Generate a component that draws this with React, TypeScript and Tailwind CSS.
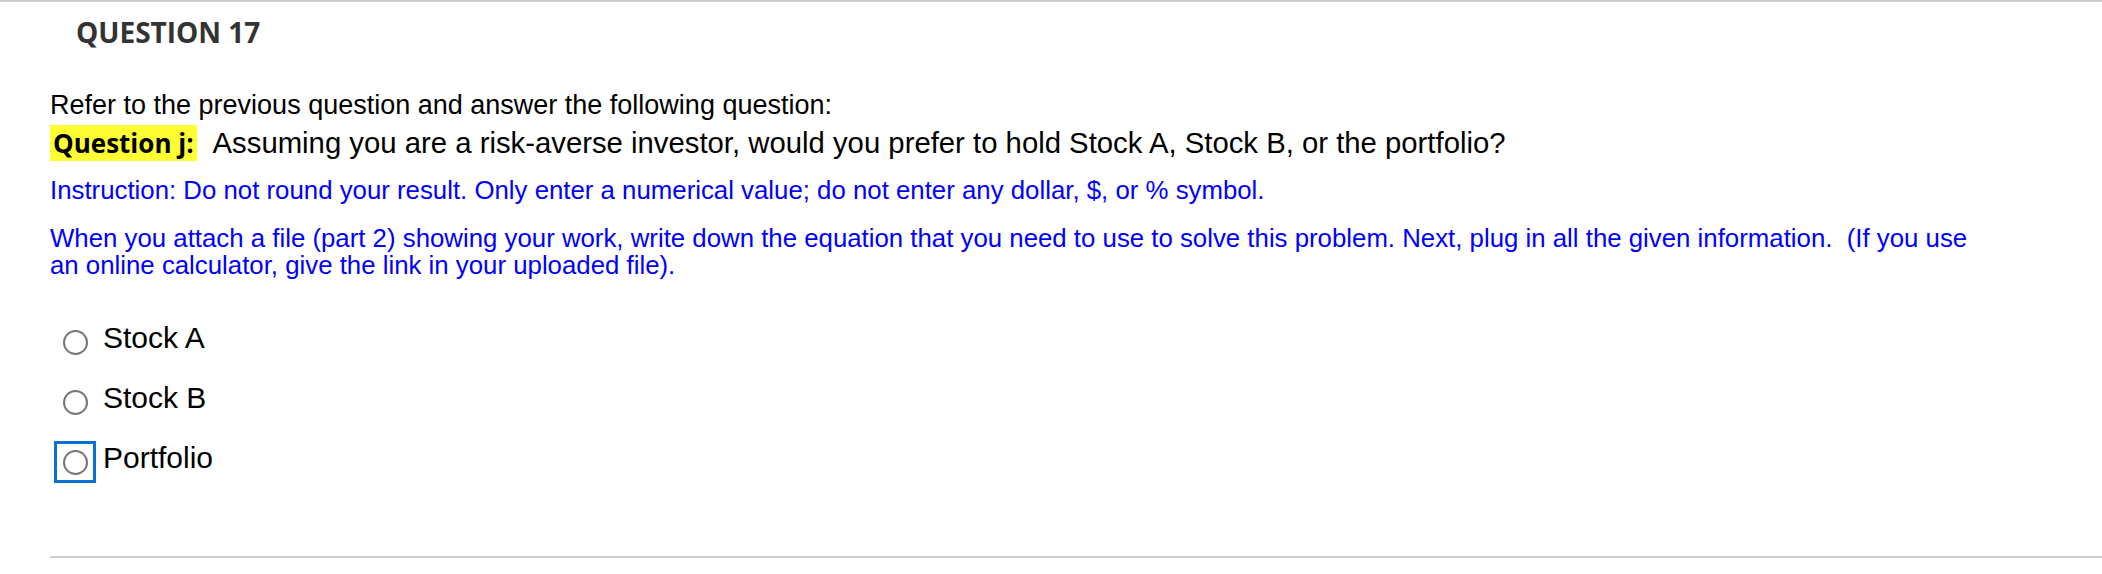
import React from "react";

type Option = {
  id: string;
  label: string;
  focused?: boolean;
};

const options: Option[] = [
  { id: "a", label: "Stock A" },
  { id: "b", label: "Stock B" },
  { id: "p", label: "Portfolio", focused: true },
];

const RadioCircle = ({ focused }: { focused?: boolean }) => (
  <div
    className={
      focused
        ? "flex h-[42px] w-[42px] items-center justify-center border-[3px] border-[#0b70d0]"
        : "flex h-[42px] w-[42px] items-center justify-center border-[3px] border-transparent"
    }
  >
    <div className="h-[25px] w-[25px] rounded-full border-2 border-[#767676] bg-white" />
  </div>
);

export default function App() {
  return (
    <div className="min-h-[574px] w-full bg-white border-t-2 border-[#cccccc] font-['Liberation_Sans',Arial,sans-serif] text-black">
      <div className="pl-[76px] pt-[11px] font-['Open_Sans',sans-serif] text-[28px] font-bold leading-[38px] text-[#333333]">
        QUESTION 17
      </div>

      <div className="ml-[50px] mt-[39px]">
        <p className="text-[27px] leading-[31px]">Refer to the previous question and answer the following question:</p>
        <p className="mt-[4px] text-[29.3px] leading-[36px]">
          <span className="inline-block bg-[#ffff33] px-[3px] py-px font-['Open_Sans',sans-serif] text-[26px] font-bold leading-[34px]">
            Question j:
          </span>
          <span className="ml-[16px]">
            Assuming you are a risk-averse investor, would you prefer to hold Stock A, Stock B, or the portfolio?
          </span>
        </p>
        <p className="mt-[15px] text-[25.8px] leading-[28px] text-[#0000ff]">
          Instruction: Do not round your result. Only enter a numerical value; do not enter any dollar, $, or % symbol.
        </p>
        <p className="mt-[21px] max-w-[1945px] text-[25.8px] leading-[27px] text-[#0000ff]">
          When you attach a file (part 2) showing your work, write down the equation that you need to use to solve
          this problem. Next, plug in all the given information.&nbsp; (If you use an online calculator, give the link
          in your uploaded file).
        </p>
      </div>

      <div className="ml-[54px] mt-[33px] flex flex-col">
        {options.map((opt) => (
          <label key={opt.id} className="flex h-[60px] items-center">
            <RadioCircle focused={opt.focused} />
            <span className="mb-2 ml-[7px] text-[30px] leading-[32px]">{opt.label}</span>
          </label>
        ))}
      </div>

      <div className="ml-[50px] mt-[64px] border-b-2 border-[#cccccc]" />
    </div>
  );
}
